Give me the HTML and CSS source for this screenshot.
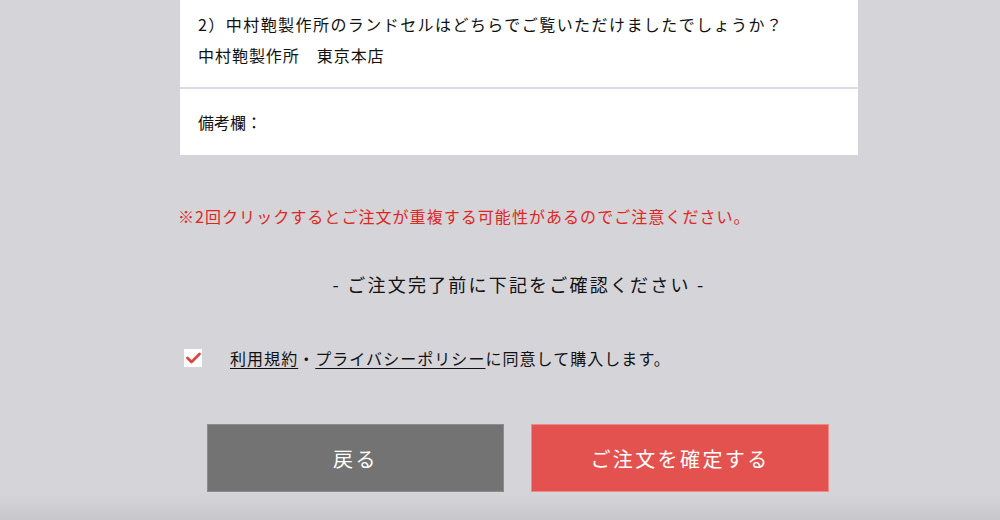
FILE: index.html
```html
<!DOCTYPE html>
<html lang="ja">
<head>
	<meta charset="UTF-8">
	<title>ご注文内容の確認</title>
	<link rel="stylesheet" href="styles.css">
</head>
<body>
	<div class="main">
		<div class="panel panel-q">
			<p class="q-title">2）中村鞄製作所のランドセルはどちらでご覧いただけましたでしょうか？</p>
			<p class="q-answer">中村鞄製作所　東京本店</p>
		</div>
		<div class="panel panel-note">
			<p>備考欄：</p>
		</div>

		<p class="warn">※2回クリックするとご注文が重複する可能性があるのでご注意ください。</p>

		<h2 class="confirm-title">- ご注文完了前に下記をご確認ください -</h2>

		<label class="agree">
			<span class="check">
				<svg width="15" height="14" viewBox="0 0 15 14">
					<polyline points="1.5,7 5.5,11 13.5,3" fill="none" stroke="#e3413d" stroke-width="2.6" stroke-linecap="round" stroke-linejoin="round"/>
				</svg>
			</span>
			<span class="agree-text"><a href="javascript:;">利用規約</a>・<a href="javascript:;">プライバシーポリシー</a>に同意して購入します。</span>
		</label>

		<div class="btns">
			<a href="javascript:;" class="btn btn-back">戻る</a>
			<a href="javascript:;" class="btn btn-submit">ご注文を確定する</a>
		</div>
	</div>
</body>
</html>
```

FILE: styles.css
```css
*{
	margin: 0;
	padding: 0;
	box-sizing: border-box;
}
html,body{
	height: 100%;
}
body{
	background: linear-gradient(to bottom, #d5d4d9 0, #d5d4d9 494px, #c8c7cb 520px);
	font-family: "Noto Sans CJK JP", "Noto Sans", sans-serif;
	color: #111;
	overflow: hidden;
}
.main{
	width: 678px;
	margin-left: 180px;
}
.panel{
	background-color: #fff;
	padding: 0 18px;
}
.panel-q{
	padding-top: 9px;
	padding-bottom: 16px;
}
.panel-q p{
	font-size: 16px;
	line-height: 31px;
}
.q-title{
	letter-spacing: 0.09em;
}
.q-answer{
	letter-spacing: 0.06em;
}
.panel-note{
	height: 68px;
	border-top: 2px solid #dcdbe0;
	display: flex;
	align-items: center;
	font-size: 16px;
}
.warn{
	margin-top: 49px;
	margin-left: -2px;
	font-size: 16px;
	line-height: 24px;
	letter-spacing: 1.05px;
	color: #e0261f;
}
.confirm-title{
	margin-top: 43px;
	font-size: 18px;
	font-weight: normal;
	line-height: 26px;
	letter-spacing: 2.2px;
	text-align: center;
}
.agree{
	margin-top: 49px;
	display: flex;
	align-items: center;
	height: 24px;
	font-size: 16px;
	letter-spacing: 1.05px;
}
.check{
	width: 18px;
	height: 18px;
	margin-left: 4px;
	margin-right: 28px;
	background-color: #fff;
	display: flex;
	align-items: center;
	justify-content: center;
}
.agree-text a{
	color: #111;
	text-decoration: underline;
	text-underline-offset: 3px;
}
.btns{
	margin-top: 54px;
	padding-left: 27px;
	display: flex;
	gap: 27px;
}
.btn{
	display: flex;
	align-items: center;
	justify-content: center;
	width: 297px;
	height: 68px;
	font-size: 20px;
	letter-spacing: 0.12em;
	color: #fff;
	text-decoration: none;
}
.btn-back{
	background-color: #727372;
	border: 1px solid #8b8c8b;
}
.btn-submit{
	width: 298px;
	background-color: #e3524e;
	border: 1px solid #ec8a87;
}
```
